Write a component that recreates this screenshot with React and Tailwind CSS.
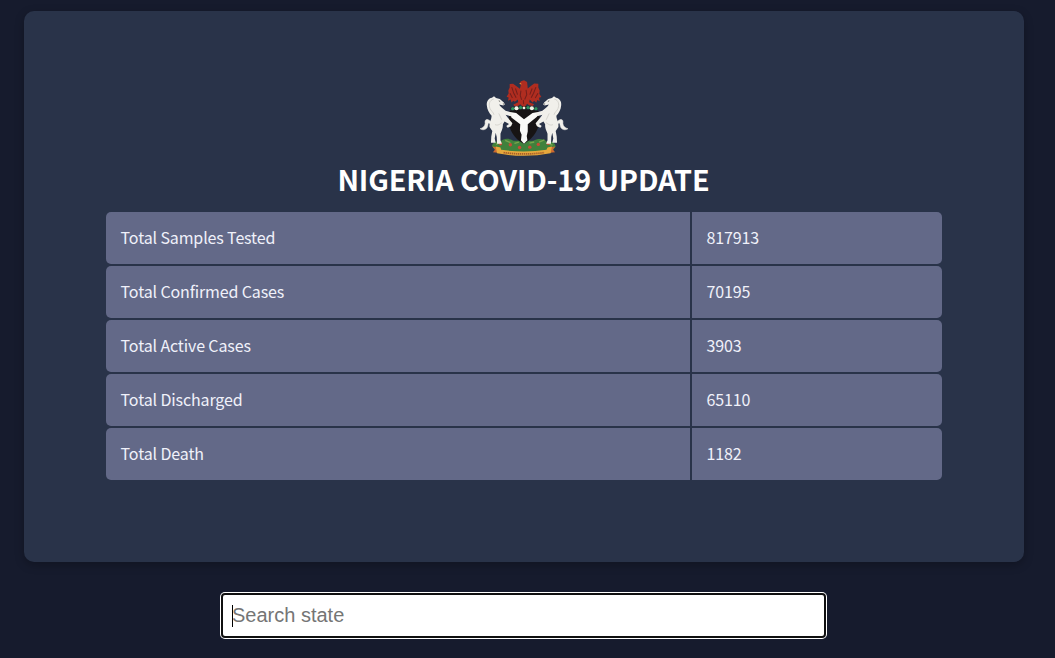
const stats = [
  { label: 'Total Samples Tested', value: '817913' },
  { label: 'Total Confirmed Cases', value: '70195' },
  { label: 'Total Active Cases', value: '3903' },
  { label: 'Total Discharged', value: '65110' },
  { label: 'Total Death', value: '1182' },
];

function Horse() {
  return (
    <g>
      <path
        d="M62 146 C50 136 44 142 46 152 C46 160 39 166 31 168 C42 175 53 169 54 158 C55 151 57 149 61 155Z"
        fill="#f1f0eb"
        stroke="#f1f0eb"
        strokeWidth="1.5"
      />
      <path
        d="M72 73 L78 78 L89 81 L101 91 L104 97 L99 100 L87 97 C91 104 99 109 106 115 L119 119 L126 125 L121 131 L106 127 L112 135 L121 146 L126 152 L122 161 L112 165 L108 160 L116 154 L103 147 L98 155 C99 168 93 175 91 183 L91 202 L95 212 L81 212 L80 192 L77 180 L74 197 L77 209 L63 209 L64 191 L67 175 L59 163 C57 150 65 141 65 130 C57 121 52 112 51 100 C49 87 57 78 66 77Z"
        fill="#f1f0eb"
      />
      <path
        d="M71 81 C58 84 56 97 60 108 C63 116 70 119 72 127 M86 123 L95 142 M75 156 C85 160 90 153 96 150"
        fill="none"
        stroke="#cac9c3"
        strokeWidth="2"
      />
      <path d="M86 86 L90 88 M98 95 L102 96" stroke="#55534f" strokeWidth="2.5" />
    </g>
  );
}

function CoatOfArms() {
  return (
    <svg viewBox="31 25 258 223" className="h-[76px] w-[88px] shrink-0" aria-label="Coat of arms">
      <path d="M66 219 C68 207 80 204 91 206 C100 194 119 197 129 203 L187 203 C203 194 220 198 228 206 C242 204 251 209 253 220 L239 239 L81 239Z" fill="#40813c" />
      <path d="M78 214 L87 210 M105 202 L120 209 M132 211 L145 207 M176 210 L190 207 M204 207 L220 201 M233 213 L244 216" stroke="#79a44d" strokeWidth="4" />
      <g fill="#c84b35">
        <circle cx="91" cy="212" r="5" />
        <circle cx="120" cy="215" r="5" />
        <circle cx="147" cy="223" r="5" />
        <circle cx="177" cy="222" r="5" />
        <circle cx="202" cy="214" r="5" />
        <circle cx="231" cy="211" r="5" />
      </g>
      <path d="M118 116 Q160 106 203 116 C212 152 200 188 160 213 C121 190 109 157 118 116Z" fill="#171414" />
      <path d="M119 119 L137 122 L160 140 L185 122 L201 119 L198 133 L171 155 L171 176 L168 189 L170 202 L160 212 L151 202 L153 186 L148 174 L149 155 L123 135Z" fill="#fafaf7" />
      <Horse />
      <g transform="translate(320 0) scale(-1 1)">
        <Horse />
      </g>
      <path d="M121 105 Q160 98 199 105 L201 114 Q160 107 120 115Z" fill="#20221d" />
      <g fill="#2c9360">
        <circle cx="127" cy="109" r="5" />
        <circle cx="150" cy="106" r="5" />
        <circle cx="172" cy="106" r="5" />
        <circle cx="195" cy="109" r="5" />
      </g>
      <g fill="#f2f5e8">
        <circle cx="138" cy="108" r="6" />
        <circle cx="160" cy="107" r="4" />
        <circle cx="183" cy="108" r="6" />
      </g>
      <path
        d="M151 39 L146 36 L151 29 L160 26 L169 31 L170 39 L171 50 L181 42 L190 35 L202 36 L202 47 L206 56 L205 65 L211 75 L204 77 L206 87 L199 84 L196 92 L190 86 L185 91 L177 82 L175 90 L190 96 L185 101 L175 99 L169 95 L163 103 L155 102 L149 96 L142 101 L131 101 L129 97 L143 90 L142 82 L133 89 L129 86 L123 91 L121 82 L113 86 L115 76 L109 74 L115 64 L114 56 L118 47 L118 37 L128 36 L136 42 L148 51Z"
        fill="#b02d20"
      />
      <path
        d="M124 46 L130 64 L137 77 M135 50 L141 68 M195 46 L188 64 L181 77 M184 50 L177 68 M151 56 L149 70 L153 83 M166 54 L168 68 L162 82 M158 84 L159 96 M119 64 L126 78 M201 64 L193 78"
        fill="none"
        stroke="#741f1c"
        strokeWidth="3"
      />
      <path d="M146 36 L151 34 L153 38Z" fill="#dfa139" />
      <path d="M67 220 L88 223 L91 239 L69 237 L75 229Z M252 220 L232 223 L229 239 L251 237 L245 229Z" fill="#ce6b2f" />
      <path d="M77 220 L91 223 L93 230 Q160 239 226 230 L229 223 L242 220 L238 240 Q160 255 81 240Z" fill="#e6a83c" />
      <path d="M100 238 Q160 246 220 238" fill="none" stroke="#a75f28" strokeWidth="5" strokeDasharray="4 2" />
    </svg>
  );
}

export default function App() {
  return (
    <main className="flex h-screen flex-col items-center overflow-hidden bg-[#161b2d] pr-[7px] pt-[11px] font-['Noto_Sans_CJK_SC',sans-serif]">
      <section className="flex h-[551px] w-[1000px] shrink-0 flex-col items-center rounded-[10px] bg-[#293349] pt-[69px] shadow-[0_3px_10px_rgba(0,0,0,0.25)]">
        <CoatOfArms />
        <h1 className="mr-px mt-[3px] h-[53px] whitespace-nowrap text-[28.8px] font-bold leading-[40px] tracking-[-0.13px] text-white">
          NIGERIA COVID-19 UPDATE
        </h1>
        <div className="flex w-[836px] flex-col gap-0.5">
          {stats.map(({ label, value }) => (
            <div key={label} className="grid h-[52px] grid-cols-[584px_250px] gap-0.5 text-[16px] tracking-[-0.13px] text-[#f0f1fa]">
              <div className="flex items-center rounded-l-[5px] bg-[#636988] px-[14.6px] pb-[2px]">{label}</div>
              <div className="flex items-center rounded-r-[5px] bg-[#636988] px-[14.6px] pb-[2px]">{value}</div>
            </div>
          ))}
        </div>
      </section>
      <div className="relative mr-px mt-[30px] h-[47px] w-[607px] shrink-0 rounded-[5px] bg-white p-px">
        <input
          type="text"
          placeholder="Search state"
          className="block h-[45px] w-[605px] rounded-[4px] border-2 border-[#101010] bg-white px-[9px] font-['Liberation_Sans',sans-serif] text-[20px] text-black outline-none placeholder:text-[#757575]"
        />
        <span className="absolute left-3 top-[13px] h-[22px] w-px bg-black" />
      </div>
    </main>
  );
}
